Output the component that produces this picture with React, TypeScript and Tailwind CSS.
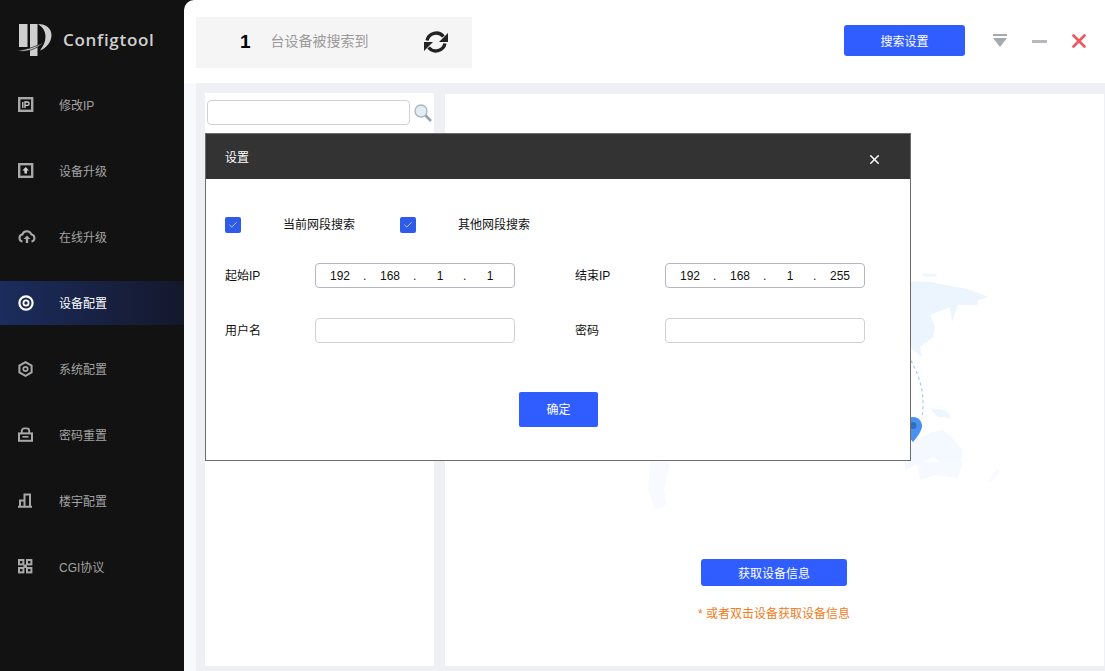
import type { ReactNode } from "react"
import { Check, X } from "lucide-react"

const font = { fontFamily: '"Liberation Sans", "Noto Sans CJK SC", sans-serif' }

function IpIcon() {
  return (
    <svg width="16" height="16" viewBox="0 0 16 16" fill="none">
      <rect x="1.2" y="1.2" width="13" height="12.6" stroke="#a8a8a8" strokeWidth="2.4" />
      <path d="M4.8 5v6M7 11V5h2.4a1.6 1.6 0 0 1 0 3.4H7" stroke="#d0d0d0" strokeWidth="1.3" />
    </svg>
  )
}

function UploadBoxIcon() {
  return (
    <svg width="16" height="16" viewBox="0 0 16 16" fill="none">
      <rect x="1.2" y="1.2" width="13" height="12.6" stroke="#a8a8a8" strokeWidth="2.4" />
      <path d="M7.7 4 11 7.6H9V10.5H6.4V7.6H4.4Z" fill="#d0d0d0" />
    </svg>
  )
}

function CloudIcon() {
  return (
    <svg width="18" height="16" viewBox="0 0 18 16" fill="none">
      <path d="M4.5 12.5A3.5 3.5 0 0 1 4.3 5.6 4.8 4.8 0 0 1 13.4 5.4 3.6 3.6 0 0 1 13.5 12.5" stroke="#a8a8a8" strokeWidth="2" />
      <path d="M9 6.5 12.4 10H10.2V14H7.8V10H5.6Z" fill="#a8a8a8" />
    </svg>
  )
}

function TargetIcon() {
  return (
    <svg width="16" height="16" viewBox="0 0 16 16" fill="none">
      <circle cx="8" cy="8" r="6.6" stroke="#fff" strokeWidth="2.2" />
      <circle cx="8" cy="8" r="2.6" stroke="#fff" strokeWidth="1.8" />
    </svg>
  )
}

function HexIcon() {
  return (
    <svg width="16" height="16" viewBox="0 0 16 16" fill="none">
      <path d="M7.5 1.2 13.6 4.5V11.5L7.5 14.8 1.4 11.5V4.5Z" stroke="#a8a8a8" strokeWidth="2" />
      <circle cx="7.5" cy="8" r="2.2" stroke="#a8a8a8" strokeWidth="1.7" />
    </svg>
  )
}

function LockIcon() {
  return (
    <svg width="16" height="16" viewBox="0 0 16 16" fill="none">
      <path d="M3.8 6.5V3.8A2.4 2.4 0 0 1 6.2 1.4h2.6a2.4 2.4 0 0 1 2.4 2.4v2.7" stroke="#a8a8a8" strokeWidth="1.8" />
      <rect x="1" y="6.4" width="13" height="7.4" stroke="#a8a8a8" strokeWidth="2" />
      <path d="M4.5 9.8h6" stroke="#a8a8a8" strokeWidth="1.6" />
    </svg>
  )
}

function BuildingIcon() {
  return (
    <svg width="16" height="16" viewBox="0 0 16 16" fill="none">
      <path d="M0 13.8h14M2 14V7.5h4.5V14M6.5 14V1.5h5.5V14" stroke="#a8a8a8" strokeWidth="2" />
    </svg>
  )
}

function GridIcon() {
  return (
    <svg width="16" height="16" viewBox="0 0 16 16" fill="none" stroke="#a8a8a8" strokeWidth="2">
      <rect x="1" y="1" width="4.4" height="4.4" />
      <rect x="9" y="1" width="4.4" height="4.4" />
      <rect x="1" y="9" width="4.4" height="4.4" />
      <rect x="9" y="9" width="4.4" height="4.4" />
      <path d="M5.4 7.2h3.6M7.2 5.4v3.6" />
    </svg>
  )
}

const menu = [
  { label: "修改IP", icon: <IpIcon /> },
  { label: "设备升级", icon: <UploadBoxIcon /> },
  { label: "在线升级", icon: <CloudIcon /> },
  { label: "设备配置", icon: <TargetIcon />, active: true },
  { label: "系统配置", icon: <HexIcon /> },
  { label: "密码重置", icon: <LockIcon /> },
  { label: "楼宇配置", icon: <BuildingIcon /> },
  { label: "CGI协议", icon: <GridIcon /> },
]

function Logo() {
  return (
    <svg width="36" height="36" viewBox="16 22 36 36">
      <rect x="19" y="24" width="8.5" height="23" fill="#cfcfcf" />
      <rect x="30" y="24" width="7.5" height="32" fill="#cfcfcf" />
      <path d="M38 24C46 24 51.5 28.5 51.5 35 51.5 42 46.5 48 40 50.5 43.5 46 45.5 41.5 45.5 36.5 45.5 31 42.5 27 38 24Z" fill="#cfcfcf" />
      <path d="M17 50.5C24 50 35 47.5 44 42 37 49 26 53 17 50.5Z" fill="#cfcfcf" stroke="#121212" strokeWidth="0.7" />
    </svg>
  )
}

function SyncIcon() {
  return (
    <svg width="24" height="24" viewBox="0 0 24 24" fill="none">
      <path d="M3 10.5A9.4 9.4 0 0 1 19.4 6.5" stroke="#222" strokeWidth="3.4" />
      <path d="M24 3V12H15Z" fill="#222" />
      <path d="M21 13.5A9.4 9.4 0 0 1 4.6 17.5" stroke="#222" strokeWidth="3.4" />
      <path d="M0 21V12H9Z" fill="#222" />
    </svg>
  )
}

function Sidebar() {
  return (
    <aside className="w-[184px] shrink-0 bg-[#121212] flex flex-col">
      <div className="h-[83px] pt-[22px] pl-[16px]">
        <div className="h-[36px] flex items-center gap-[11px]">
          <Logo />
          <span className="text-[17px] font-semibold text-[#cfcfcf] tracking-[0.7px]" style={{ fontFamily: '"Open Sans", sans-serif' }}>
            Configtool
          </span>
        </div>
      </div>
      <nav className="flex flex-col">
        {menu.map((m) => (
          <div
            key={m.label}
            className={
              "h-[44px] mb-[22px] flex items-center pl-[18px] text-[12px] " +
              (m.active ? "bg-gradient-to-r from-[#1b2c5e] to-[#14182c] text-white" : "text-[#a3a3a3]")
            }
          >
            <span className="w-[41px] flex items-center">{m.icon}</span>
            <span className="mt-[2px]">{m.label}</span>
          </div>
        ))}
      </nav>
    </aside>
  )
}

function IpBox({ parts }: { parts: string[] }) {
  return (
    <div className="w-[200px] h-[25px] border border-[#b4b7c2] rounded-[4px] flex items-center pl-[4px] text-[12px] text-[#111]">
      {parts.map((p, i) => (
        <div key={i} className="flex items-center">
          <span className="w-[40px] text-center">{p}</span>
          {i < 3 && <span className="w-[10px] pl-[3px]">.</span>}
        </div>
      ))}
    </div>
  )
}

function Field({ label, children }: { label: string; children: ReactNode }) {
  return (
    <div className="flex items-center w-[350px] shrink-0">
      <span className="w-[90px] text-[12px] text-[#111]">{label}</span>
      {children}
    </div>
  )
}

function TextBox() {
  return <div className="w-[200px] h-[25px] border border-[#cfd1d6] rounded-[4px] bg-white" />
}

function CheckItem({ label, width }: { label: string; width: string }) {
  return (
    <div className={"flex items-center " + width}>
      <span className="w-[16px] h-[16px] rounded-[2px] bg-[#2f5bea] flex items-center justify-center">
        <Check size={10} color="#dbe4ff" strokeWidth={2} />
      </span>
      <span className="ml-[42px] mt-[1px] text-[12px] text-[#111]">{label}</span>
    </div>
  )
}

function SettingsDialog() {
  return (
    <div className="absolute left-[205px] top-[133px] w-[706px] h-[328px] border border-[#6d6d6d] bg-white">
      <div className="h-[45px] bg-[#333333] flex items-center justify-between pl-[19px] pr-[28px] text-[12px] text-white">
        <span className="mt-[2px]">设置</span>
        <X className="mt-[5px]" size={15} color="#fff" strokeWidth={2.4} />
      </div>
      <div className="pl-[19px] pt-[36px]">
        <div className="flex items-center">
          <CheckItem label="当前网段搜索" width="w-[175px]" />
          <CheckItem label="其他网段搜索" width="w-[175px]" />
        </div>
        <div className="flex mt-[29px]">
          <Field label="起始IP">
            <IpBox parts={["192", "168", "1", "1"]} />
          </Field>
          <Field label="结束IP">
            <IpBox parts={["192", "168", "1", "255"]} />
          </Field>
        </div>
        <div className="flex mt-[30px]">
          <Field label="用户名">
            <TextBox />
          </Field>
          <Field label="密码">
            <TextBox />
          </Field>
        </div>
      </div>
      <div className="flex justify-center mt-[49px]">
        <button className="ml-[1px] w-[79px] h-[35px] bg-[#2f5dff] rounded-[2px] text-white text-[12px]">确定</button>
      </div>
    </div>
  )
}

function WorldMap() {
  return (
    <svg className="absolute left-[640px] top-[260px]" width="430" height="260" viewBox="640 260 430 260">
      <path d="M905 281 930 282 967 289 989 297 978 300 977 305 958 305 952 322 950 307 930 315 935 327 933 337 920 347 922 357 905 343Z" fill="#ecf4fe" />
      <path d="M922 273 937 274 936 277 924 277Z" fill="#f1f6fe" />
      <path d="M930 408 945 410 952 418 938 417Z" fill="#eef5fe" />
      <path d="M905 437 920 438 932 432 943 430 950 436 963 450 960 468 950 467 933 457 905 470Z" fill="#f4f8ff" />
      <path d="M998 468 1000 472 990 483 987 481Z" fill="#f8faff" />
      <path d="M916 462 963 462 958 478 935 475 920 480Z" fill="#f6f9ff" />
      <path d="M650 462 670 462 664 490 667 505 655 510 648 490Z" fill="#f8faff" />
      <path d="M905 350C918 372 926 390 922 417" stroke="#a9c8f5" strokeWidth="1.2" strokeDasharray="3 3" fill="none" />
      <path d="M913 417C907 417 904 422 904 426 904 432 913 442 913 442S922 432 922 426C922 422 919 417 913 417Z" fill="#4a90ee" />
      <circle cx="913" cy="425.5" r="3.5" fill="#2f6fc2" />
    </svg>
  )
}

export default function App() {
  return (
    <div className="relative w-[1105px] h-[671px] overflow-hidden flex bg-[#121212]" style={font}>
      <Sidebar />
      <main className="flex-1 bg-white rounded-tl-[10px] flex flex-col">
        <header className="h-[83px] shrink-0 flex items-start pl-[12px] pt-[17px]">
          <div className="w-[276px] h-[51px] bg-[#f5f5f5] flex items-center">
            <span className="ml-[44px] text-[19px] font-bold text-black">1</span>
            <span className="ml-[20px] mb-[2px] text-[14px] text-[#9a9a9a]">台设备被搜索到</span>
            <span className="ml-[55px] mb-[1px]">
              <SyncIcon />
            </span>
          </div>
          <button className="ml-[372px] mt-[8px] w-[121px] h-[31px] bg-[#2f5dff] rounded-[3px] text-white text-[12px] pt-[2px]">搜索设置</button>
          <div className="ml-[28px] mt-[17px] w-[14px] flex flex-col items-center">
            <span className="w-[14px] h-[2px] bg-[#a5a9b0]" />
            <span className="mt-[2px] w-0 h-0 border-l-[7px] border-r-[7px] border-t-[9px] border-l-transparent border-r-transparent border-t-[#a5a9b0]" />
          </div>
          <span className="ml-[25px] mt-[23px] w-[15px] h-[3px] bg-[#b5b8be]" />
          <X className="ml-[21px] mt-[13px]" size={22} color="#ea5a5f" strokeWidth={3} />
        </header>
        <div className="flex-1 bg-[#f8f9fc] flex pl-[12px]">
          <div className="flex-1 bg-[#eef0f4] flex pl-[9px] pt-[10px] pb-[5px] pr-[1px] gap-[11px]">
            <section className="w-[229px] bg-white pl-[2px] pt-[7px]">
              <div className="flex items-center">
                <div className="w-[203px] h-[25px] border border-[#cfd1d6] rounded-[4px] bg-white" />
                <svg className="ml-[3px]" width="20" height="20" viewBox="0 0 20 20" fill="none">
                  <circle cx="8" cy="8" r="6" fill="#e3edf5" stroke="#a9b6c2" strokeWidth="1.3" />
                  <path d="M12.5 12.5 18 18" stroke="#98a2ad" strokeWidth="2.6" />
                </svg>
              </div>
            </section>
            <section className="flex-1 bg-white mt-[1px] flex flex-col items-center pt-[465px]">
              <button className="ml-[-1px] w-[146px] h-[27px] bg-[#2f5dff] rounded-[3px] text-white text-[12px] pt-[2px]">获取设备信息</button>
              <p className="ml-[-1px] mt-[19px] text-[12px] text-[#f47a20]">* 或者双击设备获取设备信息</p>
            </section>
          </div>
        </div>
      </main>
      <WorldMap />
      <SettingsDialog />
    </div>
  )
}
